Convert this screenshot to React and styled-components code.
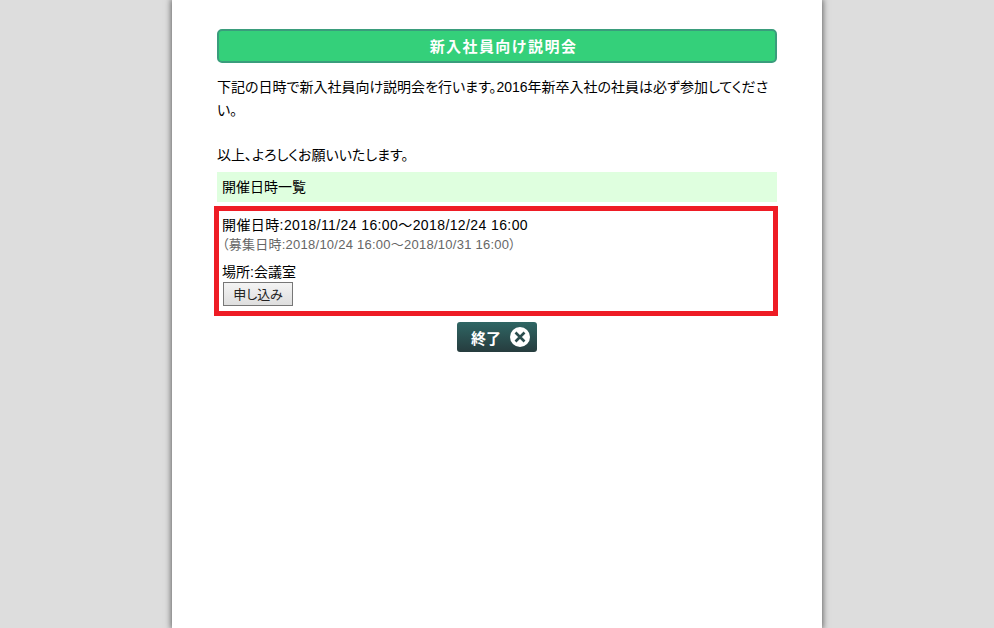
import styled, { createGlobalStyle } from "styled-components"

const GlobalStyle = createGlobalStyle`
  html, body {
    margin: 0;
    padding: 0;
    height: 100%;
    overflow: hidden;
    background-color: #dddddd;
  }
  #root {
    height: 100%;
  }
`

const Page = styled.div`
  display: flex;
  justify-content: center;
  height: 628px;
  background-color: #dddddd;
  font-family: "Liberation Sans", "Noto Sans CJK JP", sans-serif;
  font-size: 14px;
  font-feature-settings: "palt";
  color: #000;
`

const Sheet = styled.main`
  box-sizing: border-box;
  width: 650px;
  height: 628px;
  padding: 29px 45px 0;
  background-color: #fff;
  box-shadow: 0 0 6px 1px rgba(0, 0, 0, 0.55);
`

const Title = styled.h1`
  box-sizing: border-box;
  height: 34px;
  margin: 0;
  padding-left: 13px;
  border: 2px solid #3a9d7c;
  border-radius: 5px;
  background-color: #34d07a;
  color: #fff;
  font-size: 15px;
  font-weight: bold;
  font-feature-settings: normal;
  line-height: 31px;
  letter-spacing: 1.4px;
  text-align: center;
`

const Message = styled.p`
  margin: 13px 0 0;
  line-height: 22.5px;
  white-space: pre-wrap;
`

const ScheduleHeading = styled.h2`
  box-sizing: border-box;
  height: 30px;
  margin: 6px 0 0;
  padding-left: 5px;
  background-color: #dfffdf;
  font-size: 14px;
  font-weight: normal;
  line-height: 30px;
`

const ScheduleCard = styled.section`
  box-sizing: border-box;
  width: 564px;
  height: 110px;
  margin: 4px 0 0 -3px;
  padding: 4px 0 0 4px;
  border: 5px solid #ee1c25;
`

const EventDate = styled.div`
  margin-left: -1px;
  line-height: 20px;
  letter-spacing: 0.4px;
`

const RecruitDate = styled.div`
  margin: 1px 0 0 -1px;
  color: #666;
  font-size: 13px;
  line-height: 18px;
  letter-spacing: 0.25px;
`

const Place = styled.div`
  margin: 9px 0 0 -1px;
  line-height: 18px;
`

const ApplyButton = styled.button`
  display: block;
  box-sizing: border-box;
  width: 70px;
  height: 24px;
  margin-top: 1px;
  padding: 1px 0 0;
  border: 1px solid #777;
  background: linear-gradient(#f4f4f4, #dedede);
  color: #222;
  font-family: inherit;
  font-size: 13px;
  font-feature-settings: inherit;
  line-height: 21px;
`

const Footer = styled.div`
  display: flex;
  justify-content: center;
  margin-top: 6px;
`

const CloseButton = styled.button`
  display: flex;
  align-items: center;
  box-sizing: border-box;
  width: 80px;
  height: 30px;
  padding: 0 0 0 14px;
  border: 0;
  border-radius: 3px;
  background: linear-gradient(#2f6664, #263c3e);
  color: #fff;
  font-family: inherit;
  font-size: 15px;
  font-weight: bold;
`

const CloseIcon = styled.svg`
  flex: none;
  width: 20px;
  height: 20px;
  margin-left: 9px;
`

function App() {
  return (
    <>
      <GlobalStyle />
      <Page>
        <Sheet>
          <Title>新入社員向け説明会</Title>
          <Message>
            下記の日時で新入社員向け説明会を行います。2016年新卒入社の社員は必ず参加してください。
            {"\n\n"}
            以上、よろしくお願いいたします。
          </Message>
          <ScheduleHeading>開催日時一覧</ScheduleHeading>
          <ScheduleCard>
            <EventDate>開催日時:2018/11/24 16:00〜2018/12/24 16:00</EventDate>
            <RecruitDate>（募集日時:2018/10/24 16:00〜2018/10/31 16:00）</RecruitDate>
            <Place>場所:会議室</Place>
            <ApplyButton type="button">申し込み</ApplyButton>
          </ScheduleCard>
          <Footer>
            <CloseButton type="button">
              終了
              <CloseIcon viewBox="0 0 20 20" aria-hidden="true">
                <circle cx="10" cy="10" r="10" fill="#fff" />
                <path d="M5.5 5.5 14.5 14.5M14.5 5.5 5.5 14.5" stroke="#2b4d4e" strokeWidth="2.6" fill="none" />
              </CloseIcon>
            </CloseButton>
          </Footer>
        </Sheet>
      </Page>
    </>
  )
}

export default App
